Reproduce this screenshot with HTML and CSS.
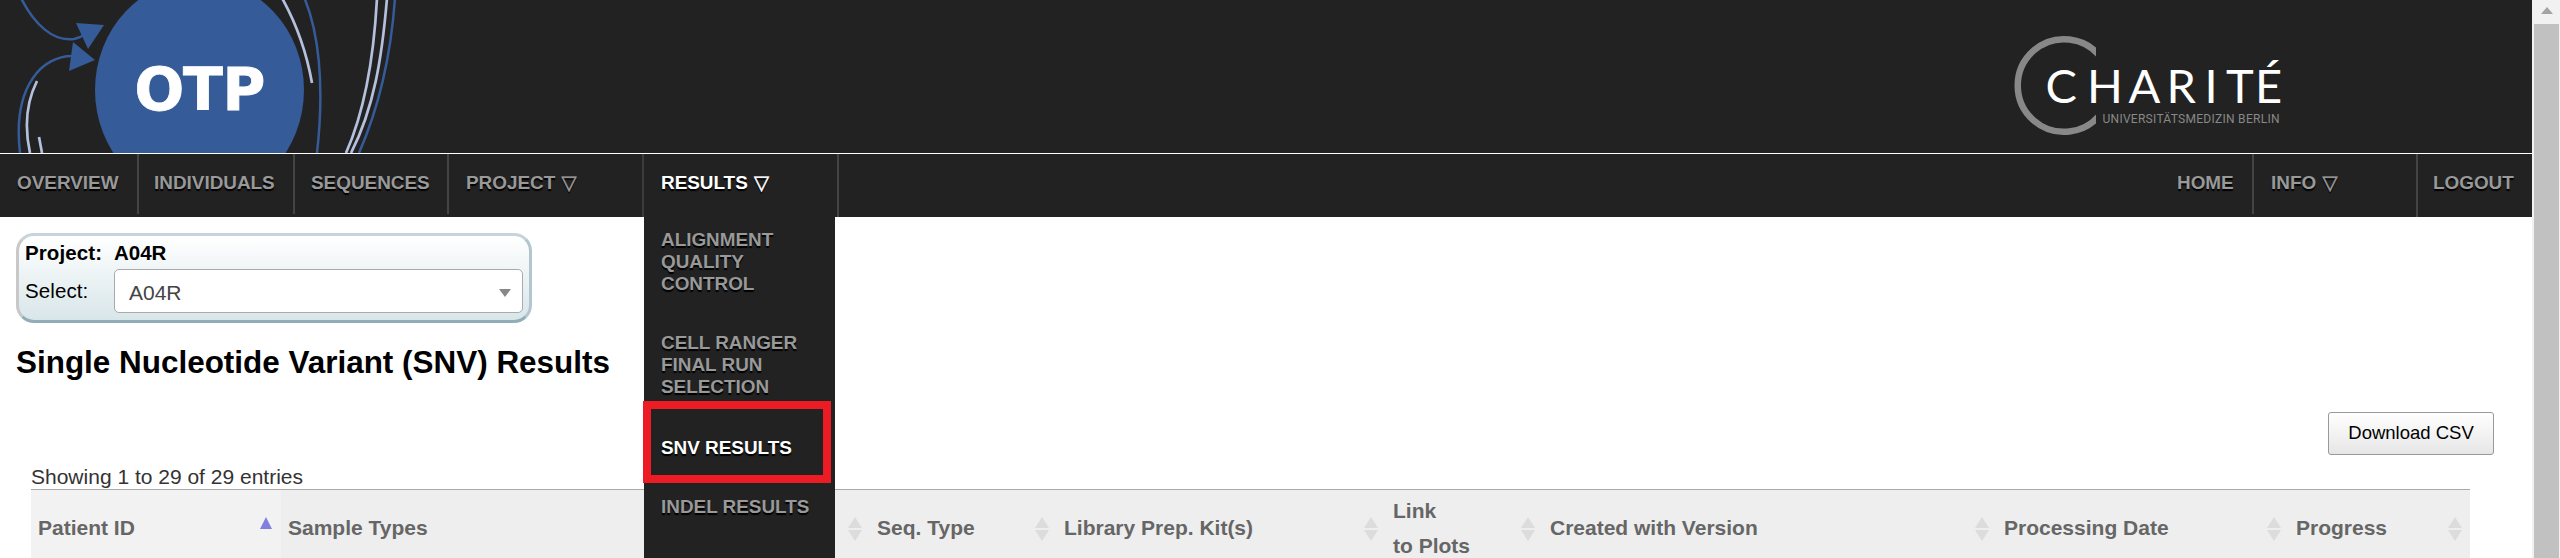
FILE: index.html
```
<!DOCTYPE html>
<html lang="en">
<head>
<meta charset="utf-8">
<title>OTP - SNV Results</title>
<link rel="stylesheet" href="styles.css">
</head>
<body>
<div class="page">
  <header class="header">
    <svg class="otp-logo" width="440" height="153" viewBox="0 0 440 153">
      <g fill="none" stroke="#355b99" stroke-width="2.5">
        <path d="M21 -2C34 24 53 42 74 39Q79 38 84 35"/>
        <path d="M72 56C44 56 12 84 20 153"/>
        <path d="M304 -3C318 30 325 82 317 153"/>
        <path d="M395 -2C391 55 380 105 359 153"/>
      </g>
      <g fill="none" stroke="#b4c0dc" stroke-width="2.7">
        <path d="M37 81C25 105 25 130 30 153"/>
        <path d="M39 137L42 153"/>
        <path d="M282 -2C297 25 307 55 312 83"/>
        <path d="M377 -2C374 55 366 108 346 153"/>
        <path d="M387 -2C382 58 374 108 351 153"/>
      </g>
      <g fill="#355b99">
        <path d="M76 23L104 25L88 49Z"/>
        <path d="M73 42L95 60L69 71Z"/>
        <ellipse cx="199.500" cy="90" rx="104.500" ry="111"/>
      </g>
      <text class="otp-text" x="134.500 183 222.500" y="109.500">OTP</text>
    </svg>
    <svg class="charite-logo" width="300" height="130" viewBox="2000 20 300 130">
      <clipPath id="ring"><path d="M2000 20H2096V150H2000Z"/></clipPath>
      <path clip-path="url(#ring)" d="M2102 59A46.300 46.300 0 1 0 2102 112" fill="none" stroke="#888" stroke-width="6.500"/>
      <text class="charite-text" y="102.500" x="2045.500 2087 2128.500 2166.500 2204.500 2226 2255">CHARITÉ</text>
      <text class="charite-sub" x="2102.500" y="123" textLength="177">UNIVERSITÄTSMEDIZIN BERLIN</text>
    </svg>
  </header>
  <nav class="nav">
    <ul class="menu">
      <li class="item w-overview">OVERVIEW</li>
      <li class="item w-individuals">INDIVIDUALS</li>
      <li class="item w-sequences">SEQUENCES</li>
      <li class="item w-project">PROJECT <span class="tri">▽</span></li>
      <li class="item tall active w-results">RESULTS <span class="tri">▽</span>
        <ul class="dropdown">
          <li class="entry">ALIGNMENT QUALITY CONTROL</li>
          <li class="entry">CELL RANGER FINAL RUN SELECTION</li>
          <li class="entry current">SNV RESULTS</li>
          <li class="entry">INDEL RESULTS</li>
        </ul>
      </li>
    </ul>
    <ul class="menu">
      <li class="item w-home">HOME</li>
      <li class="item tall w-info">INFO <span class="tri">▽</span></li>
      <li class="item last">LOGOUT</li>
    </ul>
  </nav>
  <main class="content">
    <section class="project-box">
      <b class="label">Project:</b><b>A04R</b>
      <span class="label">Select:</span>
      <div class="select"><span>A04R</span><i class="caret"></i></div>
    </section>
    <h1 class="title">Single Nucleotide Variant (SNV) Results</h1>
    <div class="toolbar"><button class="button">Download CSV</button></div>
    <div class="info">Showing 1 to 29 of 29 entries</div>
    <div class="thead">
      <div class="th sorted"><span>Patient ID</span><i class="asc"></i></div>
      <div class="th"><span>Sample Types</span><i class="both"></i></div>
      <div class="th"><span>Seq. Type</span><i class="both"></i></div>
      <div class="th"><span>Library Prep. Kit(s)</span><i class="both"></i></div>
      <div class="th"><span>Link<br>to Plots</span><i class="both"></i></div>
      <div class="th"><span>Created with Version</span><i class="both"></i></div>
      <div class="th"><span>Processing Date</span><i class="both"></i></div>
      <div class="th"><span>Progress</span><i class="both"></i></div>
    </div>
  </main>
</div>
<aside class="scrollbar"><i class="arrow"></i><div class="thumb"></div></aside>
</body>
</html>
```
FILE: styles.css
```
* { box-sizing: border-box; }
body { margin: 0; display: flex; height: 558px; overflow: hidden; background: #fff; color: #000; font: 20.500px/24px "Liberation Sans", Arial, sans-serif; }
ul { list-style: none; margin: 0; padding: 0; }
.page { width: 2532px; height: 558px; overflow: hidden; }
.header { height: 154px; background: #222; border-bottom: 1px solid #fff; display: flex; justify-content: space-between; padding-right: 232px; }
.otp-logo { display: block; }
.otp-text { font: bold 58.500px "DejaVu Sans", sans-serif; fill: #fff; stroke: #fff; stroke-width: .8px; }
.charite-logo { display: block; margin-top: 20px; }
.charite-text { font: 400 47px Lato, sans-serif; fill: #fff; }
.charite-sub { font: 400 12px Roboto, sans-serif; fill: #888; }
.nav { height: 63px; background: #222; display: flex; justify-content: space-between; font-size: 18.900px; font-weight: bold; line-height: 22px; color: #999; text-shadow: 0 2px 1px #000; }
.menu { display: flex; }
.item { height: 60px; padding: 18px 0 0 17px; border-right: 2px solid #444; position: relative; white-space: nowrap; }
.item.tall, .item.last { height: 63px; }
.item.last { border: 0; padding-left: 15px; width: 114px; }
.w-overview { width: 139px; }
.item.w-individuals { width: 156px; padding-left: 15px; }
.item.w-sequences { width: 154px; padding-left: 16px; }
.w-project { width: 195px; }
.w-results { width: 195px; }
.w-project { border-right-color: #3c3c3c; height: 63px; }
.item.w-home { width: 77px; padding-left: 0; }
.w-info { width: 164px; }
.active { color: #fff; }
.tri { font-family: "DejaVu Sans", sans-serif; font-weight: normal; font-size: 19.500px; line-height: 20px; margin-left: 1px; -webkit-text-stroke: .5px currentColor; }
.dropdown { position: absolute; left: 0; top: 63px; width: 191px; height: 341px; background: #222; color: #999; z-index: 2; }
.entry { padding: 12px 0 25px 17px; white-space: normal; }
.entry:nth-child(1) { height: 103px; padding-right: 50px; }
.entry:nth-child(2) { height: 81px; padding-right: 30px; }
.entry.current { margin-left: -1px; width: 188px; height: 82px; padding: 28px 0 0 10px; border: 8px solid #ed1c24; color: #fff; }
.entry:nth-child(4) { padding-top: 13px; white-space: nowrap; }
.content { padding: 16px; }
.project-box { width: 516px; height: 90px; border: 3px solid; border-color: #c8d4dc #b3c6cf #93adb6 #c8c8c8; border-radius: 18px; background: linear-gradient(#fff, #d8e6ea); display: grid; grid-template-columns: 89px 409px; grid-template-rows: 33px 44px; align-items: center; padding-left: 6px; }
.label { letter-spacing: .1px; }
.select { height: 44px; border: 1px solid #aaa; border-radius: 5px; background: #fff; color: #444; font-size: 21px; display: flex; justify-content: space-between; align-items: center; padding: 4px 11px 0 14px; }
.caret { border: 6px solid transparent; border-top: 8px solid #888; border-bottom: 0; }
.title { margin: 21px 0 0; font-size: 31.450px; line-height: 38px; }
.toolbar { display: flex; justify-content: flex-end; margin-top: 30px; padding-right: 22px; }
.button { width: 166px; height: 43px; border: 1px solid #999; border-radius: 3px; background: linear-gradient(#fff, #e6e6e6); font: 18.500px "Liberation Sans", Arial, sans-serif; color: #000; padding: 0 0 2px; }
.info { margin: 10px 0 0 15px; height: 24px; color: #333; font-size: 21px; }
.thead { margin-left: 15px; width: 2439px; height: 80px; border-top: 1px solid #aaa; background: #eee; color: #666; font-size: 21px; font-weight: bold; line-height: 35px; display: grid; grid-template-columns: 250px 589px 187px 329px 157px 454px 292px 181px; }
.th { display: flex; justify-content: space-between; align-items: center; padding: 0 8px 4px 7px; }
.sorted { background: #f2f2f2; }
.asc { border: 6.500px solid transparent; border-top: 0; border-bottom: 12px solid #8080e0; margin: 0 1px 9px 0; }
.both { width: 14px; height: 24px; background: #dcdcdc; margin-top: 3px; clip-path: polygon(50% 0, 100% 46%, 0 46%, 0 54%, 100% 54%, 50% 100%, 0 54%, 0 46%); }
.scrollbar { width: 28px; height: 558px; background: #f1f1f1; padding: 7px 1px 0 2px; display: flex; flex-direction: column; align-items: center; }
.arrow { border: 6.500px solid transparent; border-top: 0; border-bottom: 7px solid #a3a3a3; }
.thumb { width: 25px; flex: 1; margin-top: 10px; background: #c1c1c1; }
```
